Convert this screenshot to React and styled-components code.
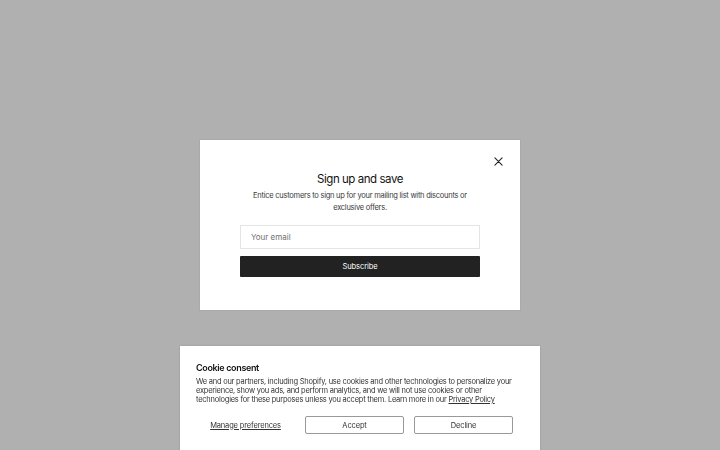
import React, { useState } from "react";
import styled, { createGlobalStyle } from "styled-components";

const GlobalStyle = createGlobalStyle`
  * { box-sizing: border-box; }
  html, body { margin: 0; padding: 0; }
  body {
    font-family: Inter, "Noto Sans", sans-serif;
    color: #121212;
    background: #b0b0b0;
    -webkit-font-smoothing: antialiased;
  }
`;

export default function App() {
  const [email, setEmail] = useState("");
  return (
    <>
      <GlobalStyle />
      <Overlay>
        <Modal>
          <CloseButton aria-label="Close">
            <svg width="9" height="9" viewBox="0 0 10 10" fill="none">
              <path d="M1 1l8 8M9 1L1 9" stroke="#222" strokeWidth="1.2" strokeLinecap="round" />
            </svg>
          </CloseButton>
          <Title>Sign up and save</Title>
          <Lead>
            Entice customers to sign up for your mailing list with discounts or
            <br />
            exclusive offers.
          </Lead>
          <Form onSubmit={(e) => e.preventDefault()}>
            <EmailInput
              type="email"
              placeholder="Your email"
              value={email}
              onChange={(e) => setEmail(e.target.value)}
            />
            <SubmitButton type="submit">Subscribe</SubmitButton>
          </Form>
        </Modal>
      </Overlay>
      <CookieBanner>
        <CookieTitle>Cookie consent</CookieTitle>
        <CookieText>
          We and our partners, including Shopify, use cookies and other technologies to personalize your
          experience, show you ads, and perform analytics, and we will not use cookies or other
          technologies for these purposes unless you accept them. Learn more in our{" "}
          <a href="#">Privacy Policy</a>
        </CookieText>
        <CookieActions>
          <LinkButton>Manage preferences</LinkButton>
          <OutlineButton>Accept</OutlineButton>
          <OutlineButton>Decline</OutlineButton>
        </CookieActions>
      </CookieBanner>
    </>
  );
}

const Overlay = styled.div`
  width: 100vw;
  height: 100vh;
  display: flex;
  align-items: center;
  justify-content: center;
`;

const Modal = styled.div`
  position: relative;
  width: 320px;
  height: 170px;
  background: #fff;
  box-shadow: 0 0 0 1px rgba(0, 0, 0, 0.04);
  display: flex;
  flex-direction: column;
  align-items: center;
  padding: 32px 40px 0;
`;

const CloseButton = styled.button`
  position: absolute;
  top: 16px;
  right: 16px;
  width: 11px;
  height: 11px;
  padding: 0;
  border: 0;
  background: none;
  display: flex;
  align-items: center;
  justify-content: center;
  cursor: pointer;
`;

const Title = styled.h2`
  margin: 0;
  font-size: 11.5px;
  font-weight: 400;
  line-height: 15px;
  letter-spacing: -0.45px;
  color: #121212;
`;

const Lead = styled.p`
  margin: 3px 0 0;
  font-size: 7.5px;
  line-height: 11.5px;
  letter-spacing: -0.25px;
  text-align: center;
  color: #3a3a3a;
`;

const Form = styled.form`
  width: 100%;
  margin-top: 12px;
  display: flex;
  flex-direction: column;
  gap: 7px;
`;

const EmailInput = styled.input`
  height: 24px;
  width: 100%;
  border: 1px solid #e4e4e4;
  padding: 0 10px;
  font-family: inherit;
  font-size: 8px;
  color: #121212;
  outline: none;
  &::placeholder { color: #6f6f6f; }
`;

const SubmitButton = styled.button`
  height: 21px;
  width: 100%;
  border: 0;
  border-radius: 1px;
  background: #222;
  color: #fff;
  font-family: inherit;
  font-size: 7.5px;
  letter-spacing: -0.1px;
  cursor: pointer;
`;

const CookieBanner = styled.div`
  position: fixed;
  left: 180px;
  top: 346px;
  width: 360px;
  height: 120px;
  background: #fff;
  box-shadow: 0 0 2px rgba(0, 0, 0, 0.15);
  padding: 16px 16px 0;
`;

const CookieTitle = styled.h3`
  margin: 0;
  font-size: 9px;
  font-weight: 600;
  line-height: 11px;
  letter-spacing: -0.35px;
  color: #121212;
`;

const CookieText = styled.p`
  margin: 4px 0 0;
  font-size: 7.5px;
  line-height: 9px;
  letter-spacing: -0.24px;
  color: #333;
  a { color: #333; text-decoration: underline; }
`;

const CookieActions = styled.div`
  margin-top: 12px;
  display: grid;
  grid-template-columns: repeat(3, 99px);
  gap: 10px;
`;

const LinkButton = styled.button`
  height: 18px;
  border: 0;
  background: none;
  font-family: inherit;
  font-size: 7.5px;
  letter-spacing: -0.15px;
  color: #333;
  text-decoration: underline;
  cursor: pointer;
`;

const OutlineButton = styled.button`
  height: 18px;
  border: 1px solid #999;
  border-radius: 2px;
  background: #fff;
  font-family: inherit;
  font-size: 7.5px;
  letter-spacing: -0.15px;
  color: #333;
  cursor: pointer;
`;
